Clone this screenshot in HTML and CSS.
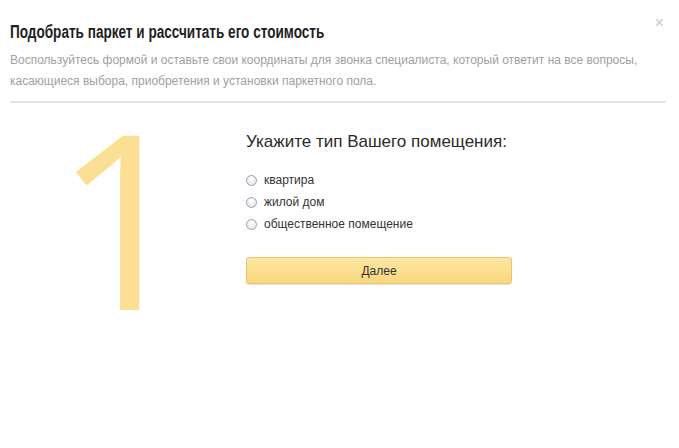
FILE: index.html
```html
<!DOCTYPE html>
<html lang="ru">
<head>
<meta charset="utf-8">
<link rel="stylesheet" href="styles.css">
</head>
<body>
<div class="modal">
  <header class="head">
    <h1 class="title">Подобрать паркет и рассчитать его стоимость</h1>
    <p class="desc">Воспользуйтесь формой и оставьте свои координаты для звонка специалиста, который ответит на все вопросы, касающиеся выбора, приобретения и установки паркетного пола.</p>
    <span class="close">×</span>
  </header>
  <main class="step">
    <div class="num">1</div>
    <form class="form">
      <h2 class="q">Укажите тип Вашего помещения:</h2>
      <label class="opt"><span class="radio"></span>квартира</label>
      <label class="opt"><span class="radio"></span>жилой дом</label>
      <label class="opt"><span class="radio"></span>общественное помещение</label>
      <button type="button" class="btn">Далее</button>
    </form>
  </main>
</div>
</body>
</html>
```
FILE: styles.css
```css
* { box-sizing: border-box; }
html, body { margin: 0; padding: 0; background: #fff; }
body { width: 679px; height: 448px; overflow: hidden; font-family: "Liberation Sans", Arial, sans-serif; }
.modal { padding: 0 13px 0 10px; }
.head { position: relative; border-bottom: 2px solid #e2e2e2; padding: 20px 0 9px; }
.title { margin: 0; width: 406px; font-weight: bold; font-size: 17.5px; line-height: 24px; color: #1e1e1e; white-space: nowrap; transform: scaleX(0.775); transform-origin: 0 0; }
.desc { margin: 6px 0 0; font-size: 12px; letter-spacing: 0; line-height: 21px; color: #a0a0a0; }
.close { position: absolute; right: 2px; top: 15px; font-size: 16px; color: #c8c8c8; line-height: 16px; }
.step { display: flex; padding-top: 0; }
.num { width: 236px; padding-left: 44px; font-family: "Open Sans", sans-serif; font-size: 243px; line-height: 226px; color: #fadf94; }
.form { display: flex; flex-direction: column; padding-top: 29px; width: 266px; }
.q { margin: 0 0 17px; font-weight: normal; font-size: 17px; line-height: 20px; color: #2a2a2a; }
.opt { display: flex; align-items: center; height: 22px; font-size: 12px; color: #333; }
.radio { width: 11px; height: 11px; border-radius: 50%; border: 1px solid #9aa3ad; background: radial-gradient(circle at 50% 35%, #fff 0, #e4e8ee 70%); margin-right: 7px; }
.btn { margin-top: 22px; height: 27px; border: 1px solid #e6c46a; border-radius: 3px; background: linear-gradient(#fde6a4, #f8d77e); font-family: "Liberation Sans", Arial, sans-serif; font-size: 12px; color: #333; box-shadow: 0 1px 1px rgba(0,0,0,0.12); }
```
